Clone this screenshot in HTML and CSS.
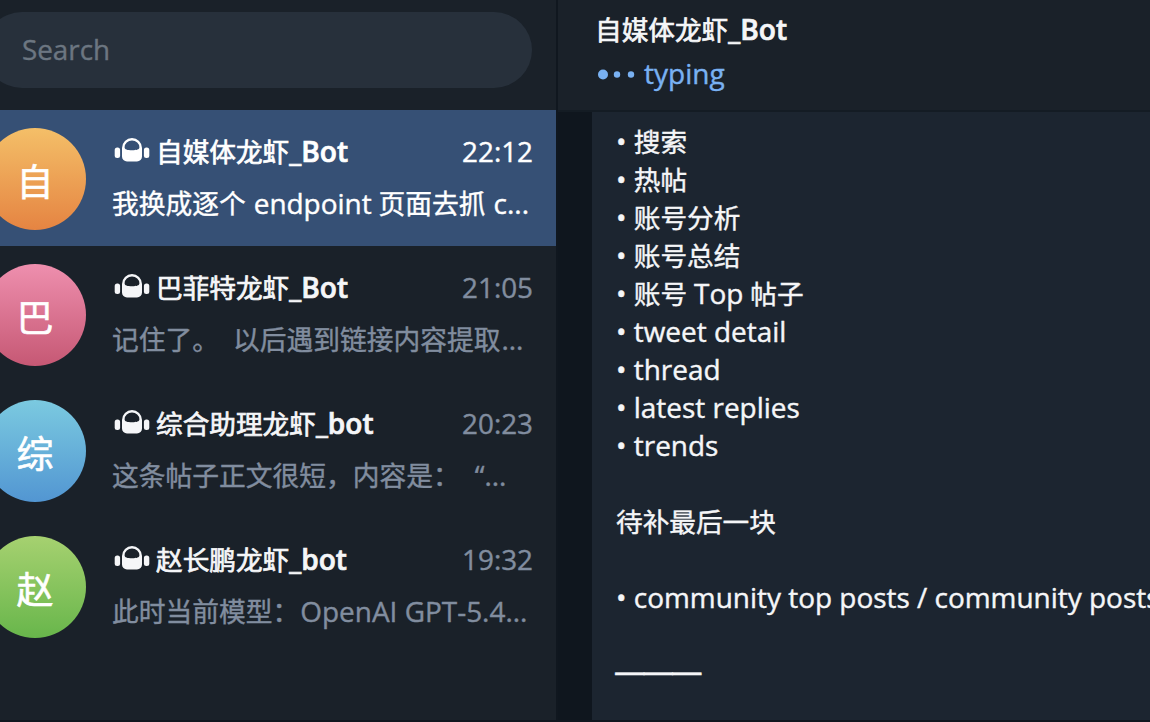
FILE: index.html
```
<!DOCTYPE html>
<html lang="zh-CN">
<head>
    <meta charset="UTF-8">
    <meta name="viewport" content="width=device-width, initial-scale=1.0">
    <title>自媒体龙虾_Bot</title>
    <link rel="stylesheet" href="styles.css">
</head>
<body>

    <svg class="sprite" aria-hidden="true">
        <symbol id="bot" viewBox="0 0 36 26">
            <rect x="0.7" y="10.5" width="5.4" height="10.5" rx="2.5"/>
            <rect x="29.9" y="10.5" width="5.4" height="10.5" rx="2.5"/>
            <path fill-rule="evenodd" d="M8 11a10 10 0 0 1 20 0v8.5a5 5 0 0 1-5 5h-10a5 5 0 0 1-5-5zM10.6 10.2c0 2.2 2.6 3 7.4 3s7.4-.8 7.4-3a7.4 6.8 0 0 0-14.8 0z"/>
        </symbol>
    </svg>

    <div class="app">
        <div class="sidebar">
            <div class="search-bar">
                <div class="search">Search</div>
            </div>

            <div class="chat active">
                <div class="avatar orange">自</div>
                <div class="info">
                    <div class="top-line">
                        <svg class="bot-icon"><use href="#bot"/></svg>
                        <span class="name">自媒体龙虾<b>_Bot</b></span>
                        <span class="time">22:12</span>
                    </div>
                    <div class="preview">我换成逐个 <span class="en">endpoint</span> 页面去抓 <span class="en">c...</span></div>
                </div>
            </div>

            <div class="chat">
                <div class="avatar pink">巴</div>
                <div class="info">
                    <div class="top-line">
                        <svg class="bot-icon"><use href="#bot"/></svg>
                        <span class="name">巴菲特龙虾<b>_Bot</b></span>
                        <span class="time">21:05</span>
                    </div>
                    <div class="preview">记住了。&nbsp; 以后遇到链接内容提取<span class="en">...</span></div>
                </div>
            </div>

            <div class="chat">
                <div class="avatar blue">综</div>
                <div class="info">
                    <div class="top-line">
                        <svg class="bot-icon"><use href="#bot"/></svg>
                        <span class="name">综合助理龙虾<b>_bot</b></span>
                        <span class="time">20:23</span>
                    </div>
                    <div class="preview">这条帖子正文很短，内容是：&nbsp; <span class="en">“...</span></div>
                </div>
            </div>

            <div class="chat">
                <div class="avatar green">赵</div>
                <div class="info">
                    <div class="top-line">
                        <svg class="bot-icon"><use href="#bot"/></svg>
                        <span class="name">赵长鹏龙虾<b>_bot</b></span>
                        <span class="time">19:32</span>
                    </div>
                    <div class="preview">此时当前模型：<span class="en">OpenAI GPT-5.4...</span></div>
                </div>
            </div>
        </div>

        <div class="main">
            <div class="header">
                <div class="title">自媒体龙虾<b>_Bot</b></div>
                <div class="status">
                    <svg class="dots" viewBox="0 0 40 12">
                        <circle cx="6" cy="7" r="5"/>
                        <circle cx="20" cy="7" r="3.2"/>
                        <circle cx="34" cy="7" r="3.2"/>
                    </svg>
                    <span>typing</span>
                </div>
            </div>

            <div class="messages">
                <div class="bubble">
                    <p><span class="en">• </span>搜索</p>
                    <p><span class="en">• </span>热帖</p>
                    <p><span class="en">• </span>账号分析</p>
                    <p><span class="en">• </span>账号总结</p>
                    <p><span class="en">• </span>账号 <span class="en">Top</span> 帖子</p>
                    <p><span class="en">• tweet detail</span></p>
                    <p><span class="en">• thread</span></p>
                    <p><span class="en">• latest replies</span></p>
                    <p><span class="en">• trends</span></p>
                    <p class="section heading">待补最后一块</p>
                    <p class="section"><span class="en">• community top posts / community posts</span></p>
                    <p class="section divider">———</p>
                </div>
            </div>
        </div>
    </div>

</body>
</html>
```
FILE: styles.css
```
* {
    box-sizing: border-box;
}

body {
    margin: 0;
    font-family: "Open Sans", "Noto Sans CJK SC", sans-serif;
    font-size: 26.67px;
    background-color: #0f161e;
    color: #f5f6f8;
    overflow: hidden;
    -webkit-text-stroke: 0.4px;
}

p {
    margin: 0;
}

.sprite {
    display: none;
}

.app {
    display: flex;
    height: 722px;
    border-bottom: 2px solid #10171f;
}

.sidebar {
    width: 558px;
    flex-shrink: 0;
    background-color: #1a2129;
    border-right: 2px solid #10171f;
}

.search-bar {
    height: 110px;
    padding: 12px 24px 0 0;
}

.search {
    height: 76px;
    margin-left: -16px;
    padding-left: 38px;
    border-radius: 38px;
    background-color: #27303b;
    color: #6c7681;
    font-size: 27.8px;
    line-height: 75px;
}

.chat {
    display: flex;
    height: 136px;
    padding: 18px 24px 0 0;
    white-space: nowrap;
}

.active {
    background-color: #365075;
}

.avatar {
    width: 102px;
    height: 102px;
    margin-left: -16px;
    border-radius: 50%;
    flex-shrink: 0;
    color: #fff;
    font-size: 37px;
    line-height: 107px;
    text-align: center;
    -webkit-text-stroke: 0.6px;
}

.orange {
    background: linear-gradient(#f4bf68, #e58442);
}

.pink {
    background: linear-gradient(#ee8fae, #c65874);
}

.blue {
    background: linear-gradient(#7bcae0, #5296d2);
}

.green {
    background: linear-gradient(#a6d170, #68b64b);
}

.info {
    flex: 1;
    padding-left: 26px;
}

.top-line {
    display: flex;
    align-items: center;
    height: 46px;
    padding-left: 2px;
}

.bot-icon {
    width: 36px;
    height: 26px;
    margin: 0 6px 2px 0;
    fill: #f5f6f8;
}

.name {
    flex: 1;
    padding-bottom: 1px;
    -webkit-text-stroke: 0.7px;
}

.name b,
.title b {
    font-weight: 600;
    font-size: 28.1px;
    -webkit-text-stroke: 0.7px;
}

.time {
    margin-right: -1px;
    color: #818d9f;
    font-size: 27.8px;
}

.preview {
    height: 56px;
    color: #818d9f;
    font-size: 26.75px;
    line-height: 59px;
}

.en {
    font-size: 27.95px;
}

.preview .en {
    margin-left: 1px;
}

.active .name,
.active .time,
.active .preview {
    color: #fff;
}

.active .bot-icon {
    fill: #fff;
}

.main {
    flex: 1;
    min-width: 0;
}

.header {
    height: 112px;
    padding: 9px 0 0 37px;
    background-color: #1a2129;
    border-bottom: 2px solid #141c24;
}

.title {
    height: 40px;
    line-height: 40px;
    -webkit-text-stroke: 0.7px;
}

.status {
    display: flex;
    align-items: center;
    height: 48px;
    padding-left: 2px;
    color: #79b1f2;
    font-size: 28px;
}

.dots {
    width: 40px;
    height: 13px;
    margin-right: 7px;
    fill: #79b1f2;
}

.messages {
    height: 608px;
    padding-left: 34px;
}

.bubble {
    height: 608px;
    padding: 10px 0 0 24px;
    background-color: #1c2530;
    white-space: nowrap;
    overflow: hidden;
}

.bubble p {
    height: 38px;
    line-height: 38px;
}

.bubble .section {
    margin-top: 38px;
}

.bubble .heading {
    line-height: 40px;
}

.bubble .divider {
    margin-left: -2px;
    font-size: 31.5px;
    letter-spacing: -3px;
    line-height: 31px;
    -webkit-text-stroke: 0.6px;
}
```
